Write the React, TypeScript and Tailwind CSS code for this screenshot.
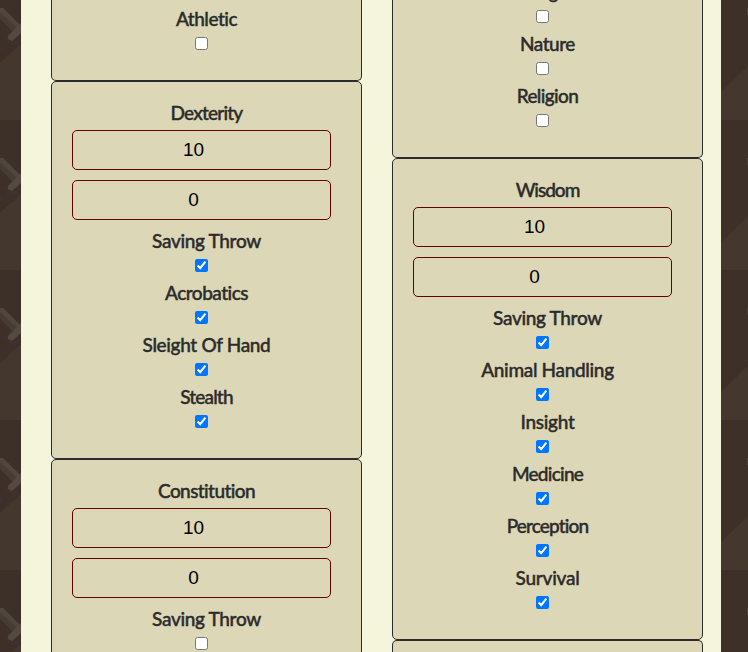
import React from "react";

type Skill = { name: string; checked?: boolean };

const tracking: Record<string, string> = {
  "Saving Throw": "tracking-[-0.33px]",
  Athletic: "tracking-[-0.5px]",
  Dexterity: "tracking-[-0.8px]",
  Acrobatics: "tracking-[-0.5px]",
  "Sleight Of Hand": "tracking-[-0.33px]",
  Stealth: "tracking-[-0.85px]",
  Constitution: "tracking-[-0.6px]",
  Investigation: "tracking-[-0.6px]",
  Nature: "tracking-[-0.5px]",
  Religion: "tracking-[-0.62px]",
  Wisdom: "tracking-[-1px]",
  "Animal Handling": "tracking-[-0.33px]",
  Insight: "tracking-[-0.28px]",
  Medicine: "tracking-[-0.75px]",
  Perception: "tracking-[-0.85px]",
  Survival: "tracking-[-0.25px]",
};

function Label({ name }: { name: string }) {
  return (
    <div className={`h-6 text-center text-[19px] leading-[22px] whitespace-nowrap [-webkit-text-stroke:0.4px_#2b2b2b] ${tracking[name]}`}>
      {name}
    </div>
  );
}

function SkillRow({ skill }: { skill: Skill }) {
  return (
    <div className="flex h-[52px] shrink-0 flex-col">
      <Label name={skill.name} />
      <input type="checkbox" defaultChecked={skill.checked} className="mx-auto mt-[5px] h-[13px] w-[13px] -translate-x-[5px]" />
    </div>
  );
}

function Score({ value }: { value: string }) {
  return (
    <input
      defaultValue={value}
      className="mb-[10px] block h-10 w-[259px] rounded-[5px] border border-[#660000] bg-transparent pr-[16px] pb-px text-center font-['Liberation_Sans',Arial,sans-serif] text-[19px] text-black"
    />
  );
}

const card = "shrink-0 rounded-[5px] border border-[#2b2b2b] bg-[#dcd7b6] px-5";

function Ability({ name, skills }: { name: string; skills: Skill[] }) {
  return (
    <section className={`${card} py-5`}>
      <div className="mb-1">
        <Label name={name} />
      </div>
      <Score value="10" />
      <Score value="0" />
      {skills.map((s) => (
        <SkillRow key={s.name} skill={s} />
      ))}
    </section>
  );
}

function Swords({ side }: { side: "left" | "right" }) {
  return (
    <svg className={side === "left" ? "h-[652px] w-[21px]" : "h-[652px] w-[27px]"}>
      {[-30, 120, 270, 420, 570].map((y) => (
        <g key={y} transform={`translate(0 ${y})`}>
          <rect width="27" height="150" fill="#3d3029" />
          {side === "left" ? (
            <>
              <path d="M0 93L21 74V150H0Z" fill="#43372e" />
              <path d="M0 74L4 79L1 82H0Z M5 62L3 67L11 75L17 74L17 71L10 71L7 67Z" fill="#412f31" />
              <path d="M0 38H3L21 56V62L14 63L0 49Z" fill="#463c34" />
              <path d="M0 38H3L20 55L17 58L0 42Z" fill="#50463d" />
              <path d="M21 53L8 66V69L12 71L21 63Z" fill="#544a3f" />
            </>
          ) : (
            <>
              <path d="M0 122L27 96V150H0Z" fill="#43372e" />
              <path d="M26 38h1v7h-1z" fill="#4b4137" />
            </>
          )}
        </g>
      ))}
    </svg>
  );
}

export default function App() {
  return (
    <div className="flex h-[652px] w-[748px] overflow-hidden bg-[#3d3029] font-[Lato,sans-serif] font-medium text-[#2b2b2b]">
      <Swords side="left" />
      <main className="flex h-[652px] w-[700px] gap-[30px] overflow-hidden bg-[#f5f5dc] pl-[30px]">
        <div className="flex w-[311px] flex-col">
          <section className={`${card} h-[81px] rounded-t-none border-t-0 pt-2`}>
            <SkillRow skill={{ name: "Athletic" }} />
          </section>
          <Ability
            name="Dexterity"
            skills={[
              { name: "Saving Throw", checked: true },
              { name: "Acrobatics", checked: true },
              { name: "Sleight Of Hand", checked: true },
              { name: "Stealth", checked: true },
            ]}
          />
          <Ability name="Constitution" skills={[{ name: "Saving Throw" }]} />
        </div>
        <div className="flex w-[311px] flex-col">
          <section className={`${card} flex h-[158px] flex-col overflow-hidden rounded-t-none border-t-0`}>
            <div className="-mt-[19px]">
              <SkillRow skill={{ name: "Investigation" }} />
              <SkillRow skill={{ name: "Nature" }} />
              <SkillRow skill={{ name: "Religion" }} />
            </div>
          </section>
          <Ability
            name="Wisdom"
            skills={[
              { name: "Saving Throw", checked: true },
              { name: "Animal Handling", checked: true },
              { name: "Insight", checked: true },
              { name: "Medicine", checked: true },
              { name: "Perception", checked: true },
              { name: "Survival", checked: true },
            ]}
          />
          <section className={`${card} h-3 rounded-b-none border-b-0`} />
        </div>
      </main>
      <Swords side="right" />
    </div>
  );
}
